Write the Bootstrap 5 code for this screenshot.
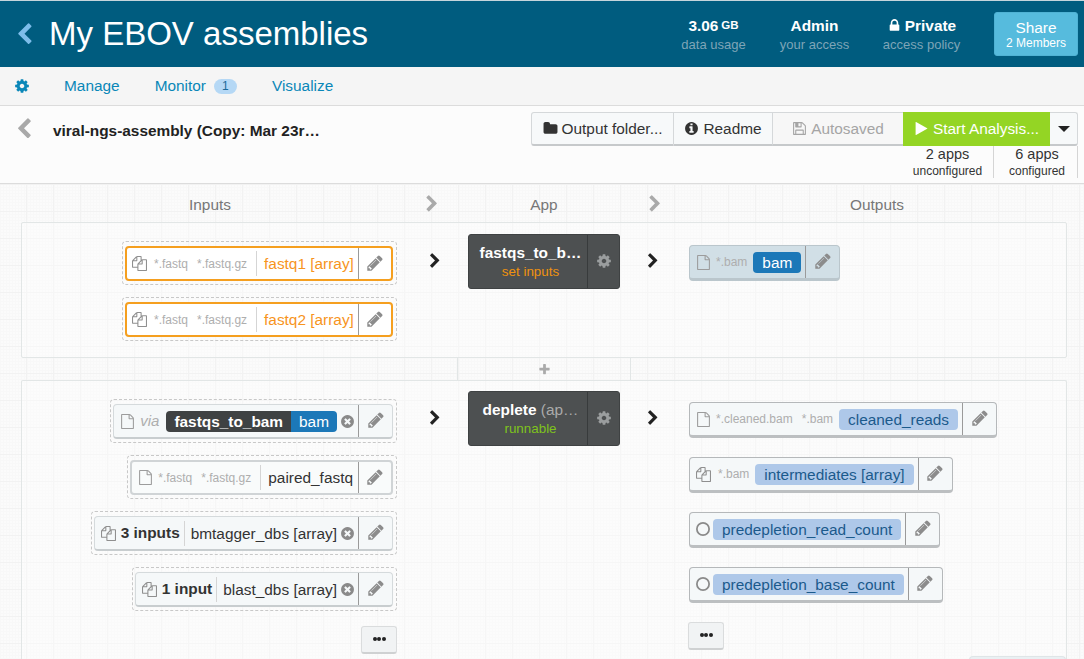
<!DOCTYPE html>
<html lang="en">

<head>
    <meta charset="UTF-8">
    <meta name="viewport" content="width=device-width, initial-scale=1">
    <title>My EBOV assemblies</title>
    <link href="https://cdn.jsdelivr.net/npm/bootstrap@5.3.0/dist/css/bootstrap.min.css" rel="stylesheet">
    <style>
        html, body { height: 100%; overflow: hidden; }
        body {
            font-family: "Liberation Sans", Arial, sans-serif;
            font-size: 15.4px;
            color: #333;
            background: #fff;
        }
        svg.ico { fill: currentColor; display: block; flex: none; }

        /* project header */
        .proj-head {
            height: 67px;
            background: #005c7f;
            border-top: 1px solid #c5d5dc;
            color: #fff;
            padding-left: 13px;
            padding-right: 6px;
        }
        .proj-back { color: #7dbdea; margin-right: 13px; }
        .proj-title { font-size: 33px; font-weight: 400; margin: 0 0 2px; line-height: 1; }
        .stat-box { text-align: center; line-height: 1; padding-top: 1px; }
        .stat-data { width: 65px; margin-right: 33px; }
        .stat-access { width: 71px; margin-right: 28px; }
        .stat-policy { width: 87px; margin-right: 29px; }
        .stat-top { font-size: 15.4px; font-weight: 700; margin-bottom: 5px; display: flex; justify-content: center; align-items: center; gap: 3px; white-space: nowrap; }
        .stat-top small { font-size: 11.5px; }
        .stat-sub { font-size: 13px; color: #7ea5b7; white-space: nowrap; }
        .share-btn {
            width: 84px; height: 44px;
            background: #56bbdd;
            border: 1px solid #4fb2d4;
            border-radius: 3px;
            color: #fff;
            font-size: 15.4px;
            line-height: 1;
            padding: 1px 0 0;
        }
        .share-btn span { display: block; font-size: 12px; margin-top: 1px; }

        /* sub navigation */
        .sub-nav {
            height: 39px;
            background: #f5f5f5;
            border-bottom: 1px solid #dcdcdc;
            padding-left: 14px;
        }
        .sub-nav a { color: #0a87b8; text-decoration: none; font-size: 15.4px; }
        .sub-gear { color: #0a87b8; margin-right: 34px; }
        .sub-gap { margin-right: 35px; }
        .sub-count {
            background: #b5d8f5; color: #1a6a9a;
            font-size: 12px; line-height: 15px;
            width: 23px; text-align: center;
            border-radius: 8px;
            margin-left: 8px;
        }

        /* toolbar */
        .wf-bar {
            height: 78px;
            background: #fcfcfc;
            border-bottom: 1px solid #dcdcdc;
            padding: 6px 6px 0 13px;
        }
        .wf-back { color: #a9a9a9; margin-top: 6px; margin-right: 18px; }
        .wf-name { font-weight: 700; font-size: 15.4px; color: #222; margin-top: 10px; white-space: nowrap; line-height: 17px; }
        .bar-btn {
            height: 34px;
            background: #f7f9fa;
            border: 1px solid #d5d8da;
            border-bottom: 2px solid #c6c9cb;
            color: #333;
            font-size: 15.4px;
            display: flex; align-items: center; justify-content: center; gap: 4px;
            white-space: nowrap;
        }
        .bar-btn.folder { width: 143px; border-radius: 3px 0 0 3px; }
        .bar-btn.readme { width: 99px; border-left: 0; }
        .bar-btn.saved { background: #f7f7f7; color: #a5a5a5; border-left: 0; border-right: 0; width: 130px; }
        .bar-btn.go { background: #94d524; border-color: #94d524; color: #fff; width: 147px; }
        .bar-btn.drop { width: 28px; border-left: 0; border-radius: 0 3px 3px 0; }
        .caret-down { width: 0; height: 0; border: 6px solid transparent; border-top: 6px solid #222; border-bottom: 0; }
        .app-counts { height: 32px; }
        .app-count { width: 84px; text-align: center; line-height: 1; font-size: 14.5px; color: #333; white-space: nowrap; padding-top: 1px; border-right: 1px solid #d5d5d5; }
        .app-count span { display: block; font-size: 12px; margin-top: 3px; }
        .app-count.one { padding-right: 8px; }
        .app-count.two { padding-left: 3px; }

        /* canvas */
        .wf-canvas {
            height: 475px;
            overflow: hidden;
            padding: 0 17px 0 21px;
            background-color: #fbfbfb;
            background-image:
                linear-gradient(#f2f2f2 1px, transparent 1px),
                linear-gradient(90deg, #f2f2f2 1px, transparent 1px),
                linear-gradient(#f8f8f8 1px, transparent 1px),
                linear-gradient(90deg, #f8f8f8 1px, transparent 1px);
            background-size: 27px 27px, 27px 27px, 3px 3px, 3px 3px;
            background-position: -1px 0, -1px 0, 0 0, 0 0;
        }
        .col-titles { height: 38px; color: #777; font-size: 15.4px; }
        .col-titles > div { line-height: 17px; padding-top: 12px; }
        .t-inputs { width: 402px; padding-right: 24px; text-align: center; }
        .t-app { width: 200px; padding-right: 4px; text-align: center; }
        .t-outputs { flex: 1; padding-left: 18px; text-align: center; }
        .t-arrow { color: #aaa; width: 23px; }
        .t-arrow svg { margin-top: -1px; }
        .stage {
            border: 1px solid #e2e6e6;
            border-radius: 2px;
            background: rgba(255, 255, 255, .35);
            height: 136px;
        }
        .stage.second { height: 300px; border-bottom: 0; }
        .in-col { width: 375px; padding-top: 18px; flex: none; }
        .out-col { padding-top: 22px; flex: 1; }
        .second .out-col { padding-top: 21px; }
        .arrow-col { width: 71px; color: #222; flex: none; padding-top: 30px; padding-left: 4px; }
        .second .arrow-col { padding-top: 29px; }
        .arrow-col.after { width: 69px; padding-left: 0; padding-right: 4px; }
        .app-col { width: 152px; flex: none; padding-top: 11px; }
        .second .app-col { padding-top: 10px; }
        .app-node {
            height: 55px;
            background: #4d5051;
            border: 1px solid #3f4243;
            border-radius: 3px;
            color: #fff;
            display: flex;
        }
        .node-txt { flex: 1; min-width: 0; text-align: center; padding-top: 10px; padding-left: 5px; line-height: 1; font-size: 15.4px; font-weight: 700; white-space: nowrap; }
        .node-txt em { font-style: normal; font-weight: 400; color: #aaa; }
        .node-txt div { font-size: 13.4px; font-weight: 400; margin-top: 5px; }
        .node-txt .pending { color: #f0930e; }
        .node-txt .ready { color: #7fc31c; }
        .node-gear { width: 32px; flex: none; border-left: 1px solid #383b3c; color: #9a9d9e; display: flex; align-items: center; justify-content: center; padding-bottom: 1px; }

        /* parameter pills */
        .drop-wrap {
            border: 1px dashed #c8c8c8;
            border-radius: 4px;
            padding: 4px 3px 3px 2px;
            margin-bottom: 12px;
        }
        .param {
            height: 35px;
            display: flex; align-items: stretch;
            background: #f5f8f9;
            border: 1px solid #d5dadc;
            border-bottom: 2px solid #c8cdcf;
            border-radius: 4px;
            white-space: nowrap;
        }
        .param.hollow { border: 2px solid #d0d4d6; background: #f9fbfb; }
        .param.todo { width: 268px; border: 2px solid #f59f1f; background: #fff; color: #f7941d; }
        .param.out { height: 36px; border: 1px solid #b5b8ba; border-bottom: 3px solid #bcbfc1; margin-bottom: 19px; width: fit-content; }
        .param.blue { background: #d1dfe6; border-color: #bac6cc; }
        .p-main { display: flex; align-items: center; padding-left: 6px; padding-right: 5px; }
        .todo .p-main { padding-left: 5px; padding-right: 4px; }
        .out .p-main { padding-right: 4px; }
        .p-main.has-x { padding-right: 3px; }
        .p-pen { width: 34px; flex: none; border-left: 1px solid #9a9a9a; color: #8c8c8c; display: flex; align-items: center; justify-content: center; padding-bottom: 2px; }
        .todo .p-pen, .hollow .p-pen { width: 33px; }
        .p-file { color: #9c9c9c; margin-right: 5px; }
        .p-files { color: #8f8f8f; margin-right: 7px; }
        .p-ring { color: #8a8a8a; margin-right: -3px; }
        .p-glob { font-size: 12px; color: #aeaeae; margin-right: 9px; }
        .p-glob.last { margin-right: 0; }
        .p-name { margin-left: 9px; padding-left: 7px; border-left: 1px solid #d5d5d5; line-height: 25px; }
        .p-count + .p-name { margin-left: 4px; padding-left: 6px; }
        .p-via { font-style: italic; color: #aeaeae; font-size: 15px; margin-right: 7px; }
        .p-count { font-weight: 700; color: #333; }
        .p-files.small-gap { margin-right: 5px; }
        .p-x { color: #8a8a8a; margin-left: 3px; }
        .link-chip { display: flex; height: 21px; line-height: 21px; border-radius: 4px; overflow: hidden; color: #fff; }
        .link-chip b { background: #3f4243; padding: 0 8px; }
        .link-chip span { background: #1c78b8; padding: 0 8px; }
        .out-chip { height: 21px; line-height: 21px; border-radius: 4px; padding: 0 9px; background: #aec8e9; color: #1b5a8c; margin-left: 6px; }
        .out-chip.dark { background: #1c78b8; color: #fff; }
        .more-btn {
            width: 36px; height: 28px;
            background: #f1f3f4;
            border: 1px solid #dadcdd;
            border-bottom: 2px solid #cfd1d2;
            border-radius: 3px;
            padding: 0 0 2px;
            display: flex; align-items: center; justify-content: center;
            gap: .5px;
        }
        .more-btn i { width: 4px; height: 4px; border-radius: 50%; background: #222; }
        .in-col .more-btn { margin-top: 3px; }
        .out-col .more-btn { margin-left: -1px; }
        .plus-row { height: 22px; }
        .plus-cell { width: 174px; margin-left: 436px; border-left: 1px solid #e2e6e6; border-right: 1px solid #e2e6e6; color: #aaa; }
        .add-tab { width: 97px; height: 10px; background: #eaf0f3; border: 1px solid #dfe5e7; border-bottom: 0; border-radius: 4px 4px 0 0; margin-left: auto; margin-top: 6px; }
    </style>
</head>

<body>
    <svg width="0" height="0" class="d-none">
        <symbol id="i-left" viewBox="0 0 1792 1792"><path d="M1427 301l-531 531 531 531q19 19 19 45t-19 45l-166 166q-19 19-45 19t-45-19l-742-742q-19-19-19-45t19-45l742-742q19-19 45-19t45 19l166 166q19 19 19 45t-19 45z"/></symbol>
        <symbol id="i-right" viewBox="0 0 1792 1792"><path d="M1363 877l-742 742q-19 19-45 19t-45-19l-166-166q-19-19-19-45t19-45l531-531-531-531q-19-19-19-45t19-45l166-166q19-19 45-19t45 19l742 742q19 19 19 45t-19 45z"/></symbol>
        <symbol id="i-cog" viewBox="0 0 1792 1792"><path d="M1152 896q0-106-75-181t-181-75-181 75-75 181 75 181 181 75 181-75 75-181zm512-109v222q0 12-8 23t-20 13l-185 28q-19 54-39 91 35 50 107 138 10 12 10 25t-9 23q-27 37-99 108t-94 71q-12 0-26-9l-138-108q-44 23-91 38-16 136-29 186-7 28-36 28h-222q-14 0-24.500-8.500t-11.500-21.500l-28-184q-49-16-90-37l-141 107q-10 9-25 9-14 0-25-11-126-114-165-168-7-10-7-23 0-12 8-23 15-21 51-66.500t54-70.500q-27-50-41-99l-183-27q-13-2-21-12.500t-8-23.500v-222q0-12 8-23t19-13l186-28q14-46 39-92-40-57-107-138-10-12-10-24 0-10 9-23 26-36 98.500-107.500t94.500-71.500q13 0 26 10l138 107q44-23 91-38 16-136 29-186 7-28 36-28h222q14 0 24.500 8.500t11.500 21.500l28 184q49 16 90 37l142-107q9-9 24-9 13 0 25 10 129 119 165 170 7 8 7 22 0 12-8 23-15 21-51 66.500t-54 70.500q26 50 41 98l183 28q13 2 21 12.500t8 23.500z"/></symbol>
        <symbol id="i-pen" viewBox="0 0 1792 1792"><path d="M491 1536l91-91-235-235-91 91v107h128v128h107zm523-928q0-22-22-22-10 0-17 7l-542 542q-7 7-7 17 0 22 22 22 10 0 17-7l542-542q7-7 7-17zm-54-192l416 416-832 832h-416v-416zm683 96q0 53-37 90l-166 166-416-416 166-165q36-38 90-38 53 0 91 38l235 234q37 39 37 91z"/></symbol>
        <symbol id="i-folder" viewBox="0 0 1792 1792"><path d="M1728 608v704q0 92-66 158t-158 66h-1216q-92 0-158-66t-66-158v-960q0-92 66-158t158-66h320q92 0 158 66t66 158v32h672q92 0 158 66t66 158z"/></symbol>
        <symbol id="i-info" viewBox="0 0 1792 1792"><path d="M1152 1376v-160q0-14-9-23t-23-9h-96v-512q0-14-9-23t-23-9h-320q-14 0-23 9t-9 23v160q0 14 9 23t23 9h96v320h-96q-14 0-23 9t-9 23v160q0 14 9 23t23 9h448q14 0 23-9t9-23zm-128-896v-160q0-14-9-23t-23-9h-192q-14 0-23 9t-9 23v160q0 14 9 23t23 9h192q14 0 23-9t9-23zm640 416q0 209-103 385.500t-279.500 279.500-385.500 103-385.500-103-279.500-279.500-103-385.500 103-385.500 279.500-279.500 385.500-103 385.500 103 279.500 279.500 103 385.500z"/></symbol>
        <symbol id="i-save" viewBox="0 0 1792 1792"><path d="M512 1536h768v-384h-768v384zm896 0h128v-896q0-14-10-38.500t-20-34.500l-281-281q-10-10-34-20t-39-10v416q0 40-28 68t-68 28h-576q-40 0-68-28t-28-68v-416h-128v1280h128v-416q0-40 28-68t68-28h832q40 0 68 28t28 68v416zm-384-928v-320q0-13-9.500-22.500t-22.500-9.500h-192q-13 0-22.500 9.500t-9.500 22.500v320q0 13 9.500 22.500t22.500 9.500h192q13 0 22.500-9.500t9.500-22.500zm640 32v928q0 40-28 68t-68 28h-1344q-40 0-68-28t-28-68v-1344q0-40 28-68t68-28h928q40 0 88 20t76 48l280 280q28 28 48 76t20 88z"/></symbol>
        <symbol id="i-lock" viewBox="0 0 1792 1792"><path d="M640 768h512v-192q0-106-75-181t-181-75-181 75-75 181v192zm832 96v576q0 40-28 68t-68 28h-960q-40 0-68-28t-28-68v-576q0-40 28-68t68-28h32v-192q0-184 132-316t316-132 316 132 132 316v192h32q40 0 68 28t28 68z"/></symbol>
        <symbol id="i-file" viewBox="0 0 1792 1792"><path d="M1596 380q28 28 48 76t20 88v1152q0 40-28 68t-68 28h-1344q-40 0-68-28t-28-68v-1600q0-40 28-68t68-28h896q40 0 88 20t76 48zm-444-244v376h376q-10-29-22-41l-313-313q-12-12-41-22zm384 1528v-1024h-416q-40 0-68-28t-28-68v-416h-768v1536h1280z"/></symbol>
        <symbol id="i-files" viewBox="0 0 1792 1792"><path d="M1696 384q40 0 68 28t28 68v1216q0 40-28 68t-68 28h-960q-40 0-68-28t-28-68v-288h-544q-40 0-68-28t-28-68v-672q0-40 20-88t48-76l408-408q28-28 76-48t88-20h416q40 0 68 28t28 68v328q68-40 128-40h416zm-544 213l-299 299h299v-299zm-640-384l-299 299h299v-299zm196 647l316-316v-416h-384v416q0 40-28 68t-68 28h-416v640h512v-256q0-40 20-88t48-76zm956 804v-1152h-384v416q0 40-28 68t-68 28h-416v640h896z"/></symbol>
        <symbol id="i-x" viewBox="0 0 1792 1792"><path d="M1277 1122q0-26-19-45l-181-181 181-181q19-19 19-45 0-27-19-46l-90-90q-19-19-46-19-26 0-45 19l-181 181-181-181q-19-19-45-19-27 0-46 19l-90 90q-19 19-19 46 0 26 19 45l181 181-181 181q-19 19-19 45 0 27 19 46l90 90q19 19 46 19 26 0 45-19l181-181 181 181q19 19 45 19 27 0 46-19l90-90q19-19 19-46zm387-226q0 209-103 385.500t-279.500 279.500-385.500 103-385.500-103-279.500-279.500-103-385.500 103-385.500 279.500-279.500 385.500-103 385.500 103 279.500 279.500 103 385.500z"/></symbol>
        <symbol id="i-play" viewBox="0 0 1792 1792"><path d="M1576 927l-1328 738q-23 13-39.500 3t-16.500-36v-1472q0-26 16.500-36t39.500 3l1328 738q23 13 23 31t-23 31z"/></symbol>
        <symbol id="i-plus" viewBox="0 0 1792 1792"><path d="M1600 736v192q0 40-28 68t-68 28h-416v416q0 40-28 68t-68 28h-192q-40 0-68-28t-28-68v-416h-416q-40 0-68-28t-28-68v-192q0-40 28-68t68-28h416v-416q0-40 28-68t68-28h192q40 0 68 28t28 68v416h416q40 0 68 28t28 68z"/></symbol>
        <symbol id="i-ring" viewBox="0 0 16 16"><circle cx="8" cy="8" r="7" fill="none" stroke="currentColor" stroke-width="2"/></symbol>
    </svg>

    <!-- Project header -->
    <div class="proj-head d-flex align-items-center">
        <svg class="ico proj-back" width="23" height="23"><use href="#i-left"/></svg>
        <h1 class="proj-title flex-grow-1">My EBOV assemblies</h1>
        <div class="stat-box stat-data">
            <div class="stat-top">3.06 <small>GB</small></div>
            <div class="stat-sub">data usage</div>
        </div>
        <div class="stat-box stat-access">
            <div class="stat-top">Admin</div>
            <div class="stat-sub">your access</div>
        </div>
        <div class="stat-box stat-policy">
            <div class="stat-top"><svg class="ico" width="15" height="15"><use href="#i-lock"/></svg>Private</div>
            <div class="stat-sub">access policy</div>
        </div>
        <button class="share-btn">Share<span>2 Members</span></button>
    </div>

    <!-- Sub navigation -->
    <div class="sub-nav d-flex align-items-center">
        <svg class="ico sub-gear" width="16" height="16"><use href="#i-cog"/></svg>
        <a href="#" class="sub-gap">Manage</a>
        <a href="#">Monitor</a>
        <span class="sub-count sub-gap">1</span>
        <a href="#">Visualize</a>
    </div>

    <!-- Workflow toolbar -->
    <div class="wf-bar d-flex">
        <svg class="ico wf-back" width="22" height="22"><use href="#i-left"/></svg>
        <div class="wf-name flex-grow-1">viral-ngs-assembly (Copy: Mar 23r…</div>
        <div>
            <div class="d-flex justify-content-end">
                <div class="bar-btn folder"><svg class="ico" width="15" height="15"><use href="#i-folder"/></svg>Output folder...</div>
                <div class="bar-btn readme"><svg class="ico" width="15" height="15"><use href="#i-info"/></svg>Readme</div>
                <div class="bar-btn saved"><svg class="ico" width="15" height="15"><use href="#i-save"/></svg>Autosaved</div>
                <div class="bar-btn go"><svg class="ico" width="15" height="15"><use href="#i-play"/></svg>Start Analysis...</div>
                <div class="bar-btn drop"><span class="caret-down"></span></div>
            </div>
            <div class="app-counts d-flex justify-content-end">
                <div class="app-count one">2 apps<span>unconfigured</span></div>
                <div class="app-count two">6 apps<span>configured</span></div>
            </div>
        </div>
    </div>

    <!-- Canvas -->
    <div class="wf-canvas">
        <div class="col-titles d-flex">
            <div class="t-inputs">Inputs</div>
            <div class="t-arrow"><svg class="ico" width="18" height="18"><use href="#i-right"/></svg></div>
            <div class="t-app">App</div>
            <div class="t-arrow"><svg class="ico" width="18" height="18"><use href="#i-right"/></svg></div>
            <div class="t-outputs">Outputs</div>
        </div>

        <!-- Stage 1 -->
        <div class="stage d-flex">
            <div class="in-col d-flex flex-column align-items-end">
                <div class="drop-wrap">
                    <div class="param todo">
                        <div class="p-main flex-grow-1">
                            <svg class="ico p-files" width="15" height="15"><use href="#i-files"/></svg>
                            <span class="p-glob">*.fastq</span><span class="p-glob last">*.fastq.gz</span>
                            <span class="p-name">fastq1 [array]</span>
                        </div>
                        <div class="p-pen"><svg class="ico" width="18" height="18"><use href="#i-pen"/></svg></div>
                    </div>
                </div>
                <div class="drop-wrap">
                    <div class="param todo">
                        <div class="p-main flex-grow-1">
                            <svg class="ico p-files" width="15" height="15"><use href="#i-files"/></svg>
                            <span class="p-glob">*.fastq</span><span class="p-glob last">*.fastq.gz</span>
                            <span class="p-name">fastq2 [array]</span>
                        </div>
                        <div class="p-pen"><svg class="ico" width="18" height="18"><use href="#i-pen"/></svg></div>
                    </div>
                </div>
            </div>
            <div class="arrow-col d-flex justify-content-center"><svg class="ico" width="16" height="16"><use href="#i-right"/></svg></div>
            <div class="app-col">
                <div class="app-node">
                    <div class="node-txt">fastqs_to_b…<div class="pending">set inputs</div></div>
                    <div class="node-gear"><svg class="ico" width="16" height="16"><use href="#i-cog"/></svg></div>
                </div>
            </div>
            <div class="arrow-col after d-flex justify-content-center"><svg class="ico" width="16" height="16"><use href="#i-right"/></svg></div>
            <div class="out-col">
                <div class="param out blue">
                    <div class="p-main">
                        <svg class="ico p-file" width="15" height="15"><use href="#i-file"/></svg>
                        <span class="p-glob last">*.bam</span>
                        <span class="out-chip dark">bam</span>
                    </div>
                    <div class="p-pen"><svg class="ico" width="18" height="18"><use href="#i-pen"/></svg></div>
                </div>
            </div>
        </div>

        <div class="plus-row d-flex">
            <div class="plus-cell d-flex align-items-center justify-content-center"><svg class="ico" width="13" height="13"><use href="#i-plus"/></svg></div>
        </div>

        <!-- Stage 2 -->
        <div class="stage second d-flex">
            <div class="in-col d-flex flex-column align-items-end">
                <div class="drop-wrap">
                    <div class="param">
                        <div class="p-main has-x">
                            <svg class="ico p-file" width="15" height="15"><use href="#i-file"/></svg>
                            <span class="p-via">via</span>
                            <div class="link-chip"><b>fastqs_to_bam</b><span>bam</span></div>
                            <svg class="ico p-x" width="15" height="15"><use href="#i-x"/></svg>
                        </div>
                        <div class="p-pen"><svg class="ico" width="18" height="18"><use href="#i-pen"/></svg></div>
                    </div>
                </div>
                <div class="drop-wrap">
                    <div class="param hollow">
                        <div class="p-main">
                            <svg class="ico p-file" width="15" height="15"><use href="#i-file"/></svg>
                            <span class="p-glob">*.fastq</span><span class="p-glob last">*.fastq.gz</span>
                            <span class="p-name">paired_fastq</span>
                        </div>
                        <div class="p-pen"><svg class="ico" width="18" height="18"><use href="#i-pen"/></svg></div>
                    </div>
                </div>
                <div class="drop-wrap">
                    <div class="param">
                        <div class="p-main has-x">
                            <svg class="ico p-files small-gap" width="15" height="15"><use href="#i-files"/></svg>
                            <span class="p-count">3 inputs</span>
                            <span class="p-name">bmtagger_dbs [array]</span>
                            <svg class="ico p-x" width="15" height="15"><use href="#i-x"/></svg>
                        </div>
                        <div class="p-pen"><svg class="ico" width="18" height="18"><use href="#i-pen"/></svg></div>
                    </div>
                </div>
                <div class="drop-wrap">
                    <div class="param">
                        <div class="p-main has-x">
                            <svg class="ico p-files small-gap" width="15" height="15"><use href="#i-files"/></svg>
                            <span class="p-count">1 input</span>
                            <span class="p-name">blast_dbs [array]</span>
                            <svg class="ico p-x" width="15" height="15"><use href="#i-x"/></svg>
                        </div>
                        <div class="p-pen"><svg class="ico" width="18" height="18"><use href="#i-pen"/></svg></div>
                    </div>
                </div>
                <button class="more-btn"><i></i><i></i><i></i></button>
            </div>
            <div class="arrow-col d-flex justify-content-center"><svg class="ico" width="16" height="16"><use href="#i-right"/></svg></div>
            <div class="app-col">
                <div class="app-node">
                    <div class="node-txt">deplete <em>(ap…</em><div class="ready">runnable</div></div>
                    <div class="node-gear"><svg class="ico" width="16" height="16"><use href="#i-cog"/></svg></div>
                </div>
            </div>
            <div class="arrow-col after d-flex justify-content-center"><svg class="ico" width="16" height="16"><use href="#i-right"/></svg></div>
            <div class="out-col">
                <div class="param out">
                    <div class="p-main">
                        <svg class="ico p-file" width="15" height="15"><use href="#i-file"/></svg>
                        <span class="p-glob">*.cleaned.bam</span><span class="p-glob last">*.bam</span>
                        <span class="out-chip">cleaned_reads</span>
                    </div>
                    <div class="p-pen"><svg class="ico" width="18" height="18"><use href="#i-pen"/></svg></div>
                </div>
                <div class="param out">
                    <div class="p-main">
                        <svg class="ico p-files" width="15" height="15"><use href="#i-files"/></svg>
                        <span class="p-glob last">*.bam</span>
                        <span class="out-chip">intermediates [array]</span>
                    </div>
                    <div class="p-pen"><svg class="ico" width="18" height="18"><use href="#i-pen"/></svg></div>
                </div>
                <div class="param out">
                    <div class="p-main">
                        <svg class="ico p-ring" width="14" height="14"><use href="#i-ring"/></svg>
                        <span class="out-chip">predepletion_read_count</span>
                    </div>
                    <div class="p-pen"><svg class="ico" width="18" height="18"><use href="#i-pen"/></svg></div>
                </div>
                <div class="param out">
                    <div class="p-main">
                        <svg class="ico p-ring" width="14" height="14"><use href="#i-ring"/></svg>
                        <span class="out-chip">predepletion_base_count</span>
                    </div>
                    <div class="p-pen"><svg class="ico" width="18" height="18"><use href="#i-pen"/></svg></div>
                </div>
                <button class="more-btn"><i></i><i></i><i></i></button>
                <div class="add-tab"></div>
            </div>
        </div>
    </div>

    <script src="https://cdn.jsdelivr.net/npm/bootstrap@5.3.0/dist/js/bootstrap.bundle.min.js"></script>
</body>

</html>
